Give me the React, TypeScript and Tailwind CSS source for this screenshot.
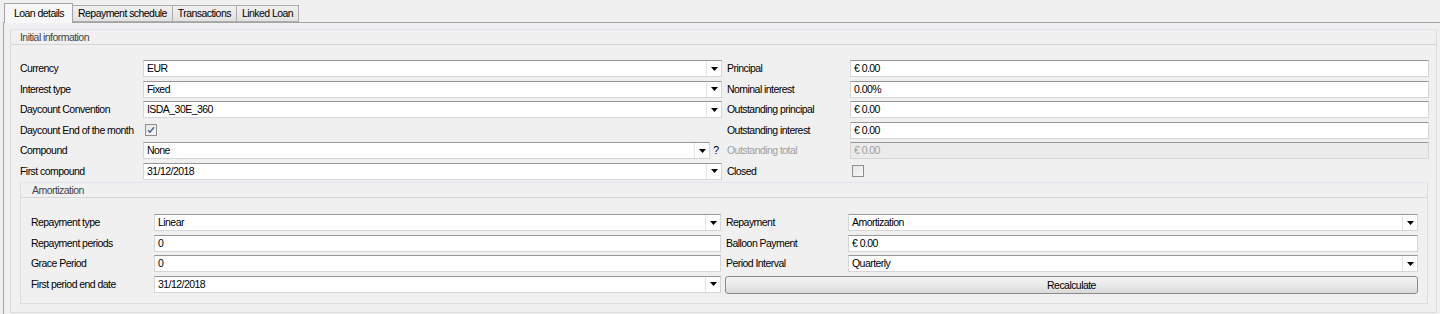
import React from "react";

function Arrow() {
  return (
    <svg width="7" height="4" viewBox="0 0 7 4">
      <path d="M0 0h7L3.5 4z" fill="#000" />
    </svg>
  );
}

function Input({ value, combo, disabled, help }: { value?: string; combo?: boolean; disabled?: boolean; help?: boolean }) {
  return (
    <div className="flex h-full">
      <div
        className={`flex-1 flex h-full border border-[#d6d6d6] border-t-[#979797] ${disabled ? "bg-[#ebebeb] text-[#a0a0a0]" : "bg-white text-black"}`}
      >
        <div className="flex-1 flex items-center pl-[3px] truncate">{value}</div>
        {combo && (
          <div className="w-[15px] border-l border-[#e4e4e4] flex items-center justify-center">
            <Arrow />
          </div>
        )}
      </div>
      {help && <div className="w-[12px] flex items-center justify-center">?</div>}
    </div>
  );
}

function Check({ checked }: { checked?: boolean }) {
  return (
    <div className="h-full flex items-center pl-[2px]">
      <div className="w-[12px] h-[12px] border border-[#8e8f8f] bg-gradient-to-br from-[#e6e6e6] to-[#f7f7f7] flex items-center justify-center">
        {checked && (
          <svg width="8" height="8" viewBox="0 0 8 8">
            <path d="M1 4.2L3 6.3 7 1.2" fill="none" stroke="#4a5f97" strokeWidth="1.4" />
          </svg>
        )}
      </div>
    </div>
  );
}

function Label({ children, disabled, right }: { children: React.ReactNode; disabled?: boolean; right?: boolean }) {
  return (
    <div className={`flex items-center whitespace-nowrap ${right ? "pl-[5px]" : ""} ${disabled ? "text-[#a0a0a0]" : "text-black"}`}>
      {children}
    </div>
  );
}

function GroupHeader({ title, pl }: { title: string; pl: string }) {
  return (
    <div className={`h-[15px] flex items-center border-b border-[#d5d5d5] text-[#444] ${pl}`}>
      {title}
    </div>
  );
}

const tabs = ["Loan details", "Repayment schedule", "Transactions", "Linked Loan"];

export default function App() {
  return (
    <div className="w-[1440px] h-[314px] overflow-hidden bg-[#f0f0f0] text-[10.5px] tracking-[-0.55px] leading-none font-['Liberation_Sans',Arial,sans-serif]">
      {/* onglets */}
      <div className="flex items-end h-[23px] pl-[4px] pt-[3px] relative z-10">
        {tabs.map((t, i) =>
          i === 0 ? (
            <div key={t} className="h-[20px] pl-[9px] pr-[8px] flex items-center bg-[#f7f7f7] border border-b-0 border-[#a4a4a4]">
              {t}
            </div>
          ) : (
            <div
              key={t}
              className="h-[17px] mb-[1px] pl-[5px] pr-[5px] flex items-center bg-gradient-to-b from-[#f0f0f0] to-[#e2e2e2] border border-l-0 border-[#acacac]"
            >
              {t}
            </div>
          )
        )}
      </div>

      <div className="ml-[3px] -mt-[1px] border-l border-t border-[#a4a4a4] h-[292px] pl-[6px] pt-[6px] bg-[#f0f0f0]">
        {/* Initial information */}
        <div className="w-[1427px] border border-[#dcdcdc] border-t-[#dde6ee] pb-[8px]">
          <GroupHeader title="Initial information" pl="pl-[9px]" />
          <div className="pt-[15px] pl-[9px] grid grid-cols-[123px_579px_128px_579px] auto-rows-[17px] gap-y-[3.5px]">
            <Label>Currency</Label>
            <Input value="EUR" combo />
            <Label right>Principal</Label>
            <Input value="€ 0.00" />

            <Label>Interest type</Label>
            <Input value="Fixed" combo />
            <Label right>Nominal interest</Label>
            <Input value="0.00%" />

            <Label>Daycount Convention</Label>
            <Input value="ISDA_30E_360" combo />
            <Label right>Outstanding principal</Label>
            <Input value="€ 0.00" />

            <Label>Daycount End of the month</Label>
            <Check checked />
            <Label right>Outstanding interest</Label>
            <Input value="€ 0.00" />

            <Label>Compound</Label>
            <Input value="None" combo help />
            <Label right disabled>Outstanding total</Label>
            <Input value="€ 0.00" disabled />

            <Label>First compound</Label>
            <Input value="31/12/2018" combo />
            <Label right>Closed</Label>
            <Check />
          </div>

          {/* Amortization */}
          <div className="mt-[2.5px] ml-[9px] mr-[8px] border border-[#dcdcdc] border-t-[#dde6ee] pb-[10px]">
            <GroupHeader title="Amortization" pl="pl-[11px]" />
            <div className="pt-[16px] pl-[10px] grid grid-cols-[123px_567px_127px_570px] auto-rows-[17px] gap-y-[3.6px]">
              <Label>Repayment type</Label>
              <Input value="Linear" combo />
              <Label right>Repayment</Label>
              <Input value="Amortization" combo />

              <Label>Repayment periods</Label>
              <Input value="0" />
              <Label right>Balloon Payment</Label>
              <Input value="€ 0.00" />

              <Label>Grace Period</Label>
              <Input value="0" />
              <Label right>Period Interval</Label>
              <Input value="Quarterly" combo />

              <Label>First period end date</Label>
              <Input value="31/12/2018" combo />
              <div className="col-span-2 pl-[4px] h-[18px]">
                <button className="w-full h-full rounded-[3px] border border-[#8a8a8a] bg-gradient-to-b from-[#f3f3f3] via-[#eaeaea] to-[#d9d9d9] flex items-center justify-center text-black">
                  Recalculate
                </button>
              </div>
            </div>
          </div>
        </div>
      </div>
    </div>
  );
}
